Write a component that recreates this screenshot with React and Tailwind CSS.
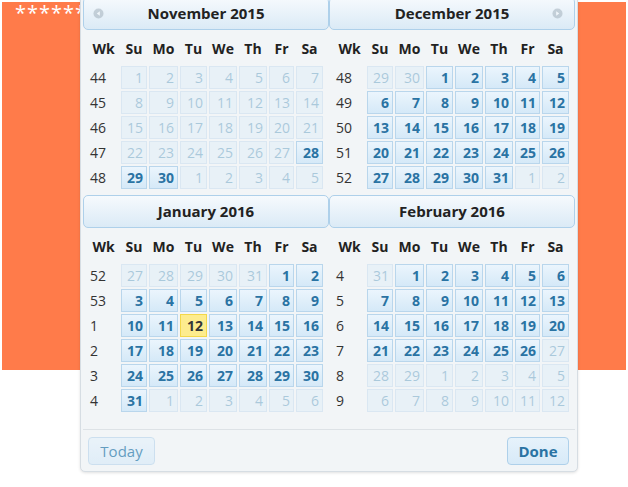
import React from "react";

const FONT = { fontFamily: '"Open Sans", "DejaVu Sans", sans-serif' };
const DAYS = ["Su", "Mo", "Tu", "We", "Th", "Fr", "Sa"];
const COLS = "grid grid-cols-[31px_26px_29px_27px_28px_28px_25px_27px] gap-x-[2px]";

const MIN = new Date(2015, 10, 28);
const MAX = new Date(2016, 1, 26);
const TODAY = new Date(2016, 0, 12);

// same week rule as jquery ui: iso week of the row's first day
const isoWeek = (date) => {
  const d = new Date(date);
  d.setDate(d.getDate() + 4 - (d.getDay() || 7));
  const time = d.getTime();
  d.setMonth(0);
  d.setDate(1);
  return Math.floor(Math.round((time - d) / 86400000) / 7) + 1;
};

const buildWeeks = (year, month, rows) => {
  const first = new Date(year, month, 1);
  const start = new Date(year, month, 1 - first.getDay());
  const weeks = [];
  for (let r = 0; r < rows; r++) {
    const days = [];
    for (let c = 0; c < 7; c++) {
      const d = new Date(start.getFullYear(), start.getMonth(), start.getDate() + r * 7 + c);
      days.push(d);
    }
    weeks.push({ wk: isoWeek(days[0]), days });
  }
  return weeks;
};

const NavIcon = ({ dir }) => (
  <svg width="11" height="11" viewBox="0 0 11 11" className="opacity-40">
    <circle cx="5.5" cy="5.5" r="5" fill="#8a9aa6" />
    {dir === "prev" ? (
      <path d="M6.8 3.2 L3.8 5.5 L6.8 7.8 Z" fill="#fff" />
    ) : (
      <path d="M4.2 3.2 L7.2 5.5 L4.2 7.8 Z" fill="#fff" />
    )}
  </svg>
);

const DayCell = ({ date, month }) => {
  const other = date.getMonth() !== month;
  const off = other || date < MIN || date > MAX;
  const isToday = !other && date.getTime() === TODAY.getTime();

  if (off) {
    return (
      <div className="h-[23px] border border-[#aed0ea] bg-[#d7ebf9] opacity-35 text-[#2779aa] text-[14px] leading-[21px] text-right pr-[3px]">
        {date.getDate()}
      </div>
    );
  }
  if (isToday) {
    return (
      <div className="h-[23px] border border-[#f3d84a] bg-[#fdec8e] text-[#363636] font-bold text-[14px] leading-[21px] text-right pr-[3px]">
        {date.getDate()}
      </div>
    );
  }
  return (
    <div className="h-[23px] border border-[#b9d6ec] bg-gradient-to-b from-[#ebf5fd] via-[#e0effa] to-[#d5e9f8] text-[#2a73a3] font-bold text-[14px] leading-[21px] text-right pr-[3px]">
      {date.getDate()}
    </div>
  );
};

const Month = ({ title, year, month, rows, prev, next }) => {
  const weeks = buildWeeks(year, month, rows);
  return (
    <div className="w-[246px]">
      <div className="relative h-[33px] flex items-center justify-center border border-[#aed0ea] rounded-[5px] bg-gradient-to-b from-[#f6fafd] to-[#dbeaf6] text-[15px] font-bold text-[#222]">
        {prev ? (
          <span className="absolute left-[9px] top-[10px] flex">
            <NavIcon dir="prev" />
          </span>
        ) : null}
        {title}
        {next ? (
          <span className="absolute right-[11px] top-[10px] flex">
            <NavIcon dir="next" />
          </span>
        ) : null}
      </div>
      <div className={`${COLS} pl-[5px] mt-[6px] h-[24px] items-center text-[14px] font-bold text-[#222]`}>
        <div className="text-center">Wk</div>
        {DAYS.map((d) => (
          <div key={d} className="text-center">
            {d}
          </div>
        ))}
      </div>
      <div className={`${COLS} gap-y-[2px] pl-[5px] mt-[6px]`}>
        {weeks.map((w) => (
          <React.Fragment key={w.wk + "-" + w.days[0].getTime()}>
            <div className="h-[23px] pl-[2px] text-[14px] leading-[23px] text-[#333]">{w.wk}</div>
            {w.days.map((d) => (
              <DayCell key={d.getTime()} date={d} month={month} />
            ))}
          </React.Fragment>
        ))}
      </div>
    </div>
  );
};

export default function App() {
  return (
    <div className="relative w-[628px] h-[487px] overflow-hidden bg-white" style={FONT}>
      <div className="ml-[2px] mt-[2px] w-[624px] h-[368px] bg-[#ff7b4a] pl-[13px] pt-[1px] text-white text-[20px] leading-[20px] tracking-[1px]">
        **********
      </div>

      <div className="absolute left-[80px] top-[-6px] w-[498px] h-[478px] flex flex-col p-[2px] border border-[#d6dde3] rounded-[5px] bg-[#f2f5f7] shadow-[0_1px_3px_rgba(0,0,0,0.12)]">
        <div className="flex">
          <Month title="November 2015" year={2015} month={10} rows={5} prev />
          <Month title="December 2015" year={2015} month={11} rows={5} next />
        </div>
        <div className="flex mt-[6px]">
          <Month title="January 2016" year={2016} month={0} rows={6} />
          <Month title="February 2016" year={2016} month={1} rows={6} />
        </div>
        <div className="mt-[17px] border-t border-[#dde2e6] flex justify-between items-start pt-[7px] pl-[5px] pr-[6px]">
          <button className="h-[28px] w-[67px] border border-[#bcd7ec] rounded-[4px] bg-gradient-to-b from-[#e6f2fb] to-[#d9ebf8] text-[15px] text-[#2779aa] opacity-70">
            Today
          </button>
          <button className="h-[28px] w-[62px] border border-[#aed0ea] rounded-[4px] bg-gradient-to-b from-[#e6f2fb] to-[#d7eaf8] text-[15px] font-bold text-[#2a73a3]">
            Done
          </button>
        </div>
      </div>
    </div>
  );
}
